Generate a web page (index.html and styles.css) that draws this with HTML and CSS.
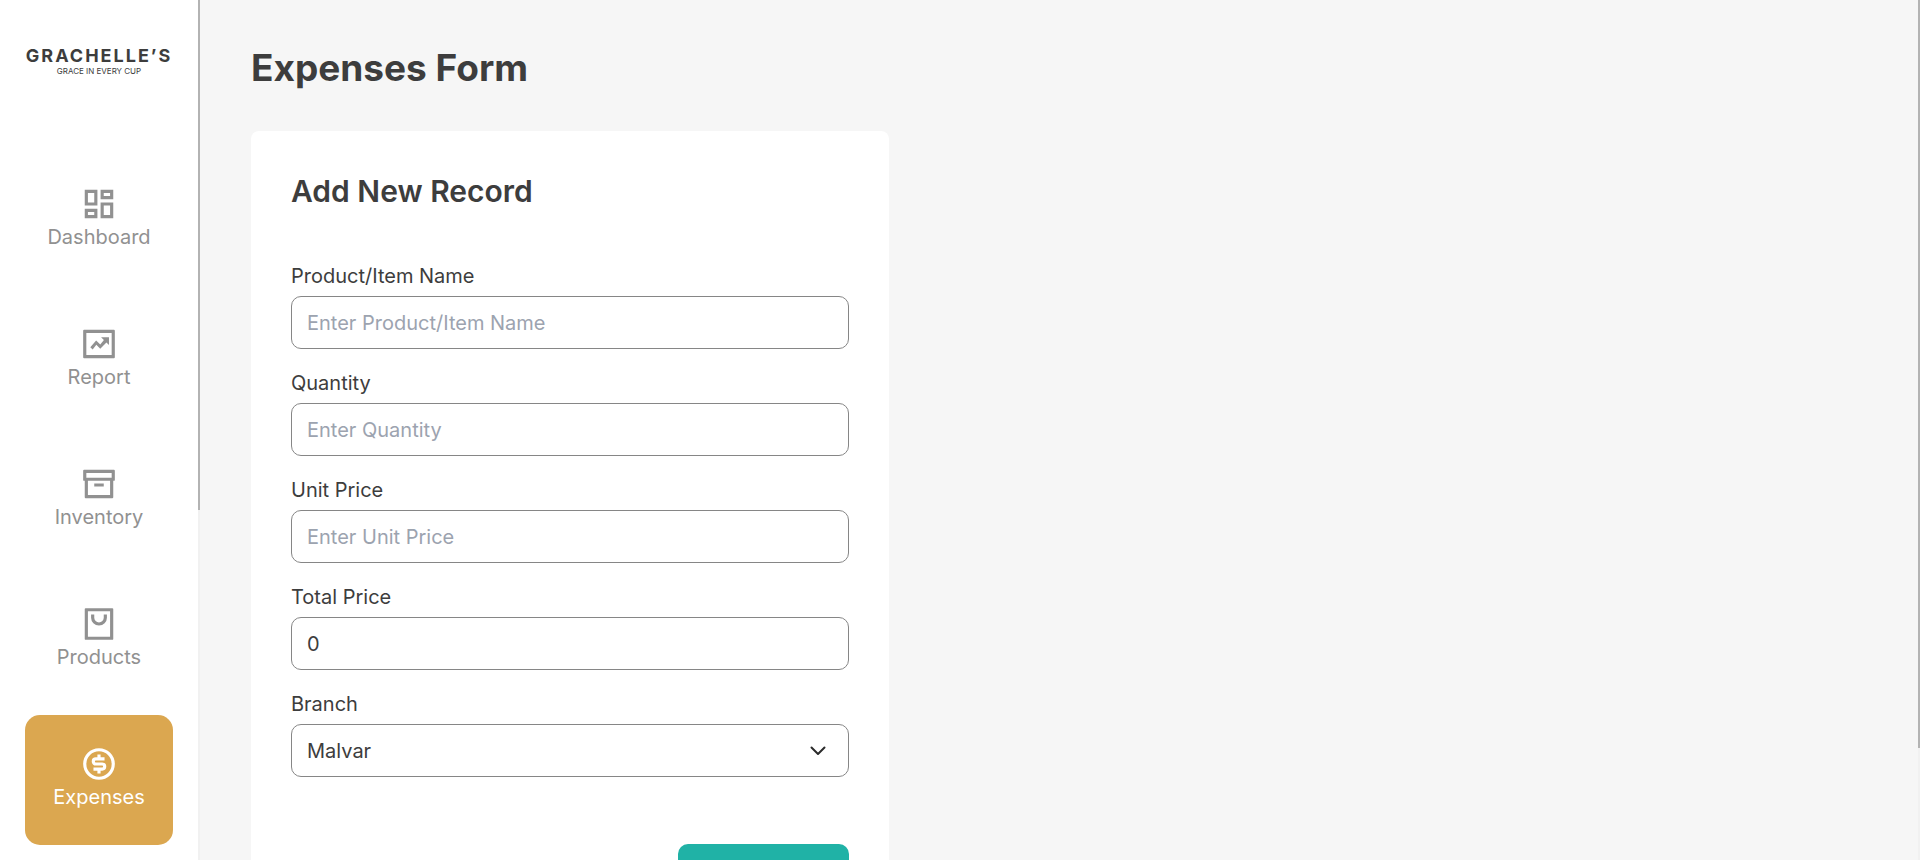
FILE: index.html
```html
<!DOCTYPE html>
<html lang="en">
<head>
<meta charset="utf-8">
<meta name="viewport" content="width=device-width, initial-scale=1">
<title>Expenses Form</title>
<link rel="stylesheet" href="styles.css">
</head>
<body>
<div class="app">
  <aside class="sidebar">
    <div class="sidebar-content">
      <div class="brand">
        <span class="brand-name">GRACHELLE’S</span>
        <span class="brand-tagline">GRACE IN EVERY CUP</span>
      </div>
      <nav class="nav">
        <a class="nav-item" href="#dashboard">
          <svg class="nav-icon" viewBox="0 0 24 24" aria-hidden="true"><path d="M19 5v2h-4V5h4M9 5v6H5V5h4m10 8v6h-4v-6h4M9 17v2H5v-2h4M21 3h-8v6h8V3zM11 3H3v10h8V3zm10 8h-8v10h8V11zm-10 4H3v6h8v-6z"/></svg>
          <span>Dashboard</span>
        </a>
        <a class="nav-item" href="#report">
          <svg class="nav-icon" viewBox="0 0 24 24" aria-hidden="true"><path fill-rule="evenodd" d="M2.600 3h18.800q.6 0 .6.600v16.800q0 .6-.6.600H2.600q-.6 0-.6-.600V3.600q0-.6.600-.600zM4 5v14h16V5z"/><path d="M13.300 7.700h5v5l-1.600-1.600-3.900 3.900-2.500-2.500-2.300 2.900-1.500-1.300 3.700-4.300 2.600 2.500 2.300-2.800z"/></svg>
          <span>Report</span>
        </a>
        <a class="nav-item" href="#inventory">
          <svg class="nav-icon" viewBox="0 0 24 24" aria-hidden="true"><path fill-rule="evenodd" d="M2.600 3h18.800q.6 0 .6.600V9.400q0 .6-.6.600H21v10.400q0 .6-.6.600H3.600q-.6 0-.6-.600V10h-.4q-.6 0-.6-.600V3.600q0-.6.600-.600zM4 5v3h16V5zm1 5v9h14v-9zm4 1.700h6v1.800H9z"/></svg>
          <span>Inventory</span>
        </a>
        <a class="nav-item" href="#products">
          <svg class="nav-icon" viewBox="0 0 24 24" aria-hidden="true"><path fill-rule="evenodd" d="M3.600 2h16.800q.6 0 .6.600v18.800q0 .6-.6.600H3.600q-.6 0-.6-.600V2.600q0-.6.600-.600zM5 4v16h14V4zm4 2v2a3 3 0 0 0 6 0V6h2v2A5 5 0 0 1 7 8V6z"/></svg>
          <span>Products</span>
        </a>
        <a class="nav-item active" href="#expenses" aria-current="page">
          <svg class="nav-icon" viewBox="0 0 24 24" aria-hidden="true"><path fill-rule="evenodd" d="M12 2a10 10 0 1 0 0 20 10 10 0 0 0 0-20zm0 2a8 8 0 1 1 0 16 8 8 0 0 1 0-16z"/><path d="M15.500 8.800H10a1.500 1.500 0 0 0 0 3.200h4a1.600 1.600 0 0 1 0 3.200H8.500M12 6v3M12 15v3" fill="none" stroke="currentColor" stroke-width="2"/></svg>
          <span>Expenses</span>
        </a>
      </nav>
    </div>
    <div class="scroll-track" aria-hidden="true"><div class="scroll-thumb sidebar-thumb"></div></div>
  </aside>
  <main class="main">
    <div class="main-content">
      <h1 class="page-title">Expenses Form</h1>
      <form class="card">
        <h2 class="card-title">Add New Record</h2>
        <div class="field">
          <label for="item-name">Product/Item Name</label>
          <input class="control" id="item-name" type="text" placeholder="Enter Product/Item Name">
        </div>
        <div class="field">
          <label for="quantity">Quantity</label>
          <input class="control" id="quantity" type="text" inputmode="numeric" placeholder="Enter Quantity">
        </div>
        <div class="field">
          <label for="unit-price">Unit Price</label>
          <input class="control" id="unit-price" type="text" inputmode="decimal" placeholder="Enter Unit Price">
        </div>
        <div class="field">
          <label for="total-price">Total Price</label>
          <input class="control" id="total-price" type="text" value="0" readonly>
        </div>
        <div class="field">
          <label for="branch">Branch</label>
          <div class="select-wrap">
            <select class="control" id="branch"><option>Malvar</option></select>
            <svg class="chevron" viewBox="0 0 16 10" aria-hidden="true"><path d="M1.500 1.500 8 8l6.500-6.500"/></svg>
          </div>
        </div>
        <div class="actions"><button class="submit" type="submit" aria-label="Submit"></button></div>
      </form>
    </div>
    <div class="scroll-track" aria-hidden="true"><div class="scroll-thumb main-thumb"></div></div>
  </main>
</div>
</body>
</html>
```
FILE: styles.css
```css
* {
  box-sizing: border-box;
}

body {
  margin: 0;
  font-family: Inter, "Liberation Sans", sans-serif;
  font-size: 20px;
  line-height: 24px;
  font-weight: 400;
  color: #3d3d3d;
  background: #f6f6f6;
}

.app {
  display: flex;
  height: 100vh;
  overflow: hidden;
}

.sidebar {
  display: flex;
  flex: none;
  width: 200px;
  background: #fff;
}

.sidebar-content {
  flex: 1;
  padding: 46px 25px 0;
  overflow: hidden;
}

.brand {
  display: flex;
  flex-direction: column;
  align-items: center;
  height: 109px;
  white-space: nowrap;
}

.brand-name {
  font-size: 18px;
  line-height: 20px;
  font-weight: 700;
  letter-spacing: 2px;
}

.brand-tagline {
  font-size: 8px;
  line-height: 10px;
  font-weight: 400;
}

.nav {
  display: flex;
  flex-direction: column;
  gap: 10px;
}

.nav-item {
  display: flex;
  flex-direction: column;
  align-items: center;
  gap: 2px;
  height: 130px;
  padding-top: 30px;
  border-radius: 15px;
  color: #919191;
  text-decoration: none;
}

.nav-item.active {
  background: #dba750;
  color: #fff;
}

.nav-icon {
  width: 38px;
  height: 38px;
  fill: currentColor;
}

.scroll-track {
  flex: none;
  width: 2px;
  background: #f1f1f1;
}

.scroll-thumb {
  background: #b3b3b3;
}

.sidebar-thumb {
  height: 59.3%;
}

.main-thumb {
  height: 87%;
}

.main {
  display: flex;
  flex: 1;
}

.main-content {
  flex: 1;
  padding: 44px 51px 0;
  overflow: hidden;
}

.page-title {
  margin: 0 0 39px;
  font-size: 37px;
  line-height: 48px;
  font-weight: 700;
}

.card {
  max-width: 638px;
  padding: 40px;
  border-radius: 8px;
  background: #fff;
}

.card-title {
  margin: 0 0 53px;
  font-size: 30px;
  line-height: 40px;
  font-weight: 600;
}

.field {
  display: flex;
  flex-direction: column;
  gap: 8px;
  margin-bottom: 22px;
}

.control {
  width: 100%;
  height: 53px;
  padding: 0 15px;
  border: 1px solid #868686;
  border-radius: 10px;
  font: inherit;
  color: inherit;
  background: #fff;
  appearance: none;
}

.control::placeholder {
  color: #9ca3af;
  opacity: 1;
}

.select-wrap {
  position: relative;
}

select.control {
  display: block;
}

.chevron {
  position: absolute;
  top: 22px;
  right: 23px;
  width: 16px;
  height: 10px;
  fill: none;
  stroke: #2b2b2b;
  stroke-width: 2;
  stroke-linecap: round;
  stroke-linejoin: round;
  pointer-events: none;
}

.actions {
  display: flex;
  justify-content: flex-end;
  padding-top: 45px;
}

.submit {
  width: 171px;
  height: 52px;
  border: 0;
  border-radius: 10px;
  background: #20b2a6;
}
```
